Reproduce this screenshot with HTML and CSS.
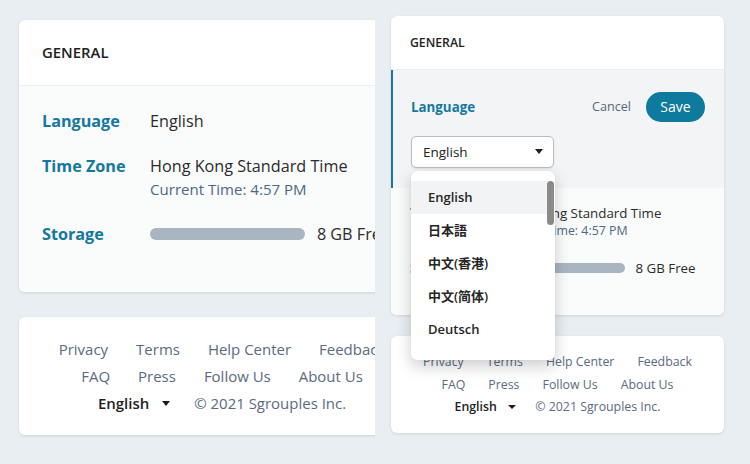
FILE: index.html
```html
<!DOCTYPE html>
<html lang="en">
<head>
<meta charset="utf-8">
<title>General settings</title>
<link rel="stylesheet" href="styles.css">
</head>
<body>
<div class="stage">
  <section class="panel panel--zoom">
    <div class="card settings">
      <div class="card-header"><span class="card-title">GENERAL</span></div>
      <div class="card-body">
        <div class="row">
          <div class="label">Language</div>
          <div class="value">English</div>
        </div>
        <div class="row">
          <div class="label">Time Zone</div>
          <div class="value">Hong Kong Standard Time<div class="sub">Current Time: 4:57 PM</div></div>
        </div>
        <div class="row">
          <div class="label">Storage</div>
          <div class="value storage"><span class="bar"></span><span>8 GB Free</span></div>
        </div>
      </div>
    </div>
    <div class="card footer">
      <div class="footer-row"><a>Privacy</a><a>Terms</a><a>Help Center</a><a>Feedback</a></div>
      <div class="footer-row"><a>FAQ</a><a>Press</a><a>Follow Us</a><a>About Us</a></div>
      <div class="footer-row footer-row--meta"><span class="lang-pick">English<span class="caret"></span></span><span>© 2021 Sgrouples Inc.</span></div>
    </div>
  </section>

  <section class="panel panel--live">
    <div class="card settings">
      <div class="card-header"><span class="card-title">GENERAL</span></div>
      <div class="edit">
        <div class="edit-top">
          <div class="label">Language</div>
          <div class="actions"><span class="cancel">Cancel</span><span class="save">Save</span></div>
        </div>
        <div class="select-wrap">
          <div class="select"><span>English</span><span class="caret caret--select"></span></div>
          <div class="menu">
            <div class="menu-item is-active">English</div>
            <div class="menu-item" lang="ja">日本語</div>
            <div class="menu-item" lang="zh-HK">中文(香港)</div>
            <div class="menu-item" lang="zh-CN">中文(简体)</div>
            <div class="menu-item">Deutsch</div>
            <div class="thumb"></div>
          </div>
        </div>
      </div>
      <div class="card-body card-body--rest">
        <div class="row">
          <div class="label">Time Zone</div>
          <div class="value">Hong Kong Standard Time<div class="sub">Current Time: 4:57 PM</div></div>
        </div>
        <div class="row">
          <div class="label">Storage</div>
          <div class="value storage"><span class="bar"></span><span>8 GB Free</span></div>
        </div>
      </div>
    </div>
    <div class="card footer">
      <div class="footer-row"><a>Privacy</a><a>Terms</a><a>Help Center</a><a>Feedback</a></div>
      <div class="footer-row"><a>FAQ</a><a>Press</a><a>Follow Us</a><a>About Us</a></div>
      <div class="footer-row footer-row--meta"><span class="lang-pick">English<span class="caret"></span></span><span>© 2021 Sgrouples Inc.</span></div>
    </div>
  </section>
</div>
</body>
</html>
```

FILE: styles.css
```css
html, body {
  margin: 0;
  padding: 0;
}
body {
  width: 750px;
  height: 464px;
  overflow: hidden;
  background: #e9eef2;
  font-family: "Open Sans", "Noto Sans CJK JP", sans-serif;
  color: #2a2a2a;
}
.stage {
  display: flex;
  align-items: flex-start;
}
.panel {
  box-sizing: border-box;
  flex-shrink: 0;
}
.panel--zoom {
  font-size: 16.2px;
  width: 375px;
  height: 464px;
  overflow: hidden;
  padding: 20px 0 0 19px;
}
.panel--zoom .card {
  width: 406px;
}
.panel--live {
  font-size: 13.33px;
  width: 333px;
  margin-left: 16px;
  padding-top: 16px;
}

.card {
  background: #fff;
  border-radius: 6px;
  box-shadow: 0 1px 3px rgba(40, 55, 70, 0.14);
  overflow: visible;
}
.card-header {
  height: 4.05em;
  box-sizing: border-box;
  display: flex;
  align-items: center;
  padding: 0 1.42em;
  border-bottom: 1px solid #eceef0;
}
.card-title {
  font-size: 0.92em;
  font-weight: 600;
  color: #222;
}
.card-body {
  background: #fafbfb;
  border-radius: 0 0 6px 6px;
  padding: 1.45em 1.42em 2.8em;
  display: flex;
  flex-direction: column;
  gap: 1.3em;
}
.card-body--rest {
  padding-top: 1.1em;
  padding-bottom: 2.75em;
}
.row {
  display: grid;
  grid-template-columns: 6.67em 1fr;
  align-items: start;
  line-height: 1.5em;
}
.label {
  font-weight: 700;
  color: #15789e;
  white-space: nowrap;
}
.value {
  color: #2b2b2b;
  white-space: nowrap;
}
.sub {
  font-size: 0.93em;
  line-height: 1.33;
  padding-bottom: 0.15em;
  color: #4d6886;
}
.storage {
  display: flex;
  align-items: center;
  gap: 0.75em;
  height: 1.5em;
}
.bar {
  display: block;
  width: 9.55em;
  height: 0.75em;
  border-radius: 0.4em;
  background: #a9b5c1;
}
.panel--live .bar {
  width: 9.5em;
}

/* expanded editing section */
.edit {
  background: #f3f4f5;
  border-left: 2px solid #15789e;
  padding: 22px 19px 20px 18px;
}
.edit-top {
  display: flex;
  align-items: center;
  justify-content: space-between;
  height: 30px;
  margin-bottom: 14px;
}
.actions {
  display: flex;
  align-items: center;
  gap: 15px;
}
.cancel {
  font-size: 12.6px;
  color: #56677a;
}
.save {
  display: flex;
  align-items: center;
  justify-content: center;
  width: 59px;
  height: 30px;
  border-radius: 15px;
  background: #0e7a9e;
  color: #fff;
  font-size: 14px;
  font-weight: 500;
}
.select-wrap {
  position: relative;
  width: 143px;
}
.select {
  box-sizing: border-box;
  height: 32px;
  display: flex;
  align-items: center;
  justify-content: space-between;
  padding: 0 10px 0 11px;
  background: #fff;
  border: 1px solid #bcbcbc;
  border-radius: 5px;
  box-shadow: 0 1px 2px rgba(0, 0, 0, 0.08);
  font-size: 13.5px;
  color: #222;
}
.caret {
  display: inline-block;
  width: 0;
  height: 0;
  border-left: 0.33em solid transparent;
  border-right: 0.33em solid transparent;
  border-top: 0.36em solid #1d1d1d;
}
.caret--select {
  border-left-width: 4.5px;
  border-right-width: 4.5px;
  border-top-width: 5.5px;
}
.menu {
  position: absolute;
  top: 35px;
  left: 0;
  width: 144px;
  height: 189px;
  box-sizing: border-box;
  padding-top: 10px;
  background: #fff;
  border-radius: 6px;
  box-shadow: 0 6px 16px rgba(0, 0, 0, 0.2), 0 0 1px rgba(0, 0, 0, 0.15);
  overflow: hidden;
  z-index: 10;
}
.menu-item {
  height: 33px;
  line-height: 33px;
  padding-left: 17px;
  margin-right: 8px;
  font-size: 13px;
  font-weight: 600;
  color: #262626;
}
.menu-item[lang="ja"] { font-family: "Open Sans", "Noto Sans CJK JP", sans-serif; }
.menu-item[lang="zh-HK"] { font-family: "Open Sans", "Noto Sans CJK TC", sans-serif; }
.menu-item[lang="zh-CN"] { font-family: "Open Sans", "Noto Sans CJK SC", sans-serif; }
.menu-item.is-active {
  background: #f2f3f4;
}
.thumb {
  position: absolute;
  top: 10px;
  right: 1px;
  width: 7px;
  height: 44px;
  border-radius: 4px;
  background: #8a8a8a;
}

/* footer */
.footer {
  margin-top: 1.72em;
  padding: 1.24em 0 1.2em;
  font-size: 0.925em;
  line-height: 1.8;
}
.footer-row {
  display: flex;
  justify-content: center;
  column-gap: 1.87em;
  white-space: nowrap;
}
.footer-row a {
  color: #5a6b7f;
  text-decoration: none;
}
.footer-row--meta {
  column-gap: 1.6em;
  color: #5a6b7f;
}
.lang-pick {
  display: inline-flex;
  align-items: center;
  gap: 0.87em;
  font-weight: 600;
  color: #222;
}
```
